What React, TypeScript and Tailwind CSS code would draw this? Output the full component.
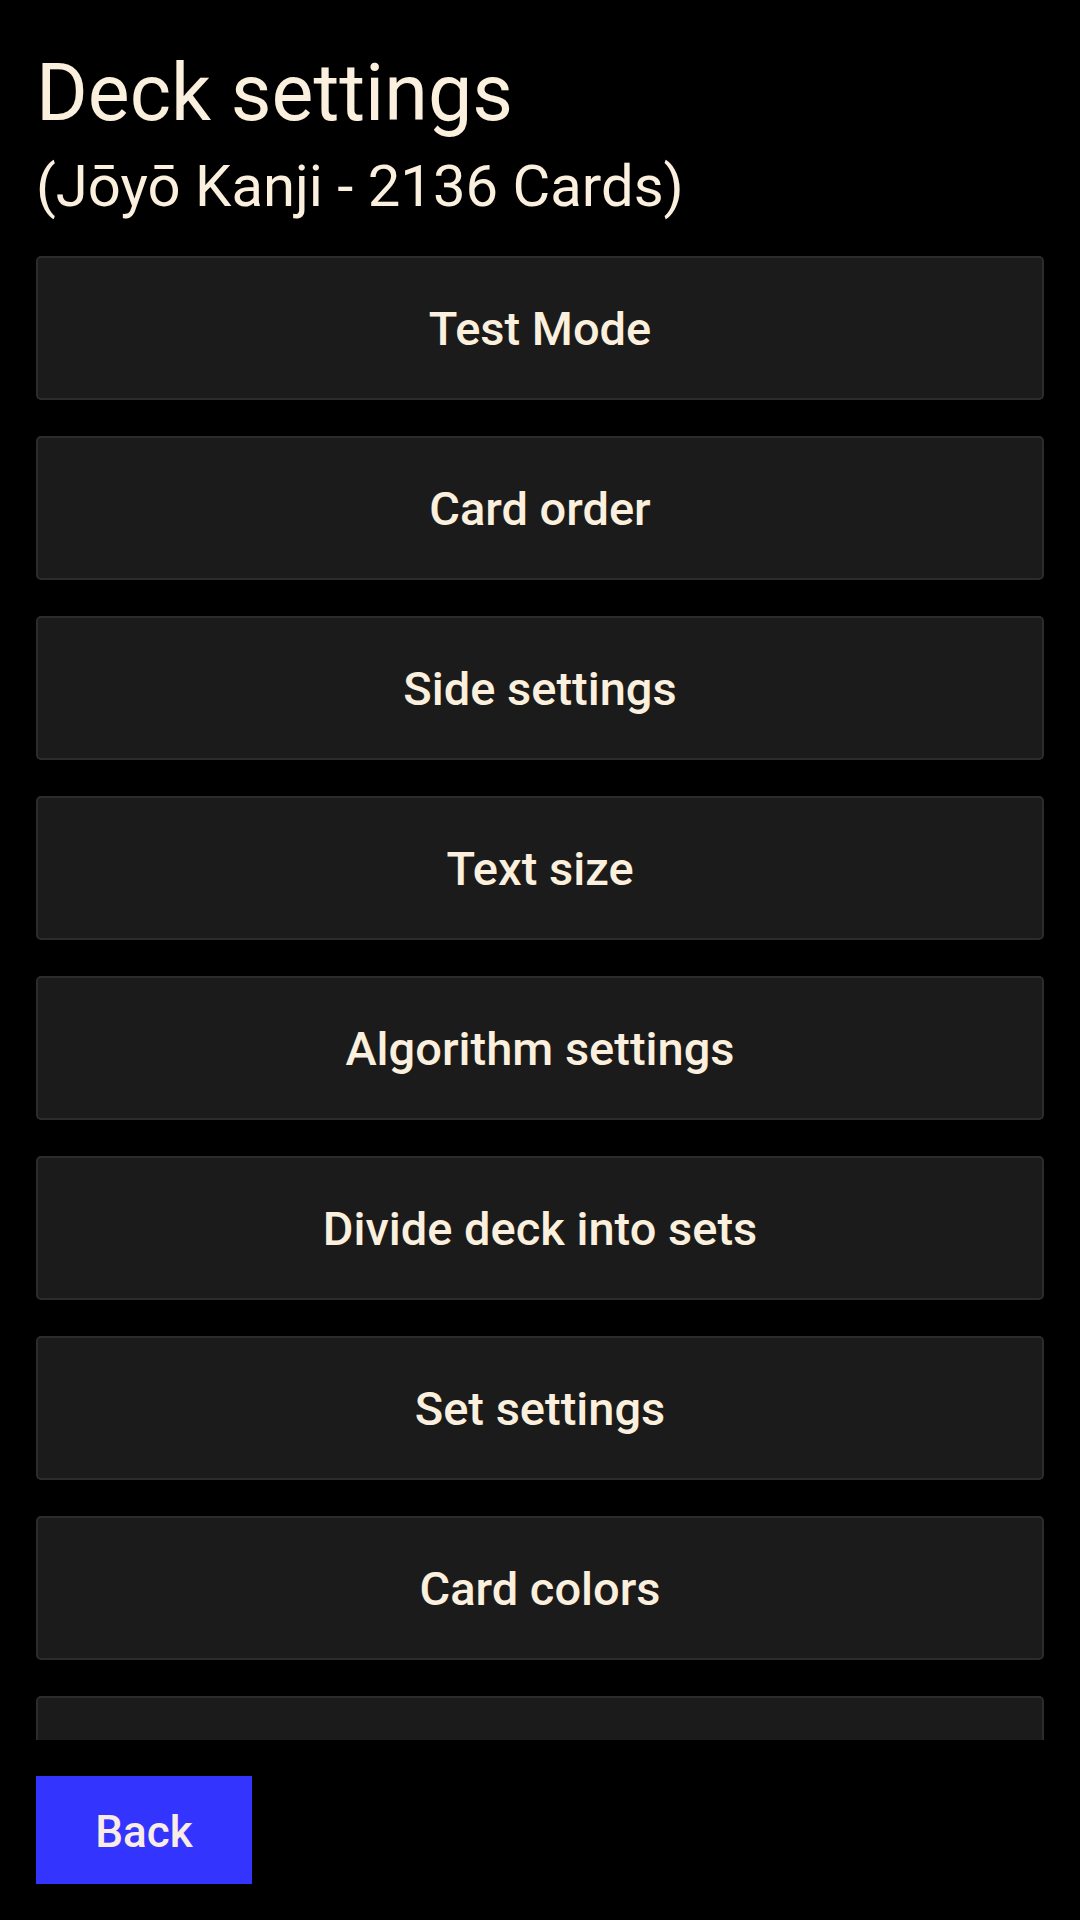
const items = [
  "Test Mode",
  "Card order",
  "Side settings",
  "Text size",
  "Algorithm settings",
  "Divide deck into sets",
  "Set settings",
  "Card colors",
  "",
];

export default function App() {
  return (
    <div
      className="w-[1080px] h-[1920px] bg-black text-[#fbefdd] flex flex-col px-[36px] pb-[36px] overflow-hidden"
      style={{ fontFamily: "Roboto, 'Noto Sans', sans-serif" }}
    >
      {/* HEADER */}
      <div className="pt-[54px]">
        <h1 className="text-[79px] leading-[79px] font-normal">Deck settings</h1>
        <p className="mt-[24px] text-[58px] leading-[58px]">(Jōyō Kanji - 2136 Cards)</p>
      </div>

      {/* SETTINGS LIST */}
      <div className="mt-[41px] flex-1 min-h-0 overflow-hidden">
        <div className="flex flex-col gap-[36px]">
          {items.map((label, i) => (
            <button
              key={i}
              className="h-[144px] w-full shrink-0 rounded-[5px] border-2 border-[#2c2c2c] bg-[#1b1b1b] pt-[3px] text-[47px] font-medium flex items-center justify-center"
            >
              {label}
            </button>
          ))}
        </div>
      </div>

      {/* FOOTER */}
      <div className="mt-[36px]">
        <button className="w-[216px] h-[108px] bg-[#3434ff] pt-[3px] text-[#f9ece6] text-[44px] font-medium">
          Back
        </button>
      </div>
    </div>
  );
}
